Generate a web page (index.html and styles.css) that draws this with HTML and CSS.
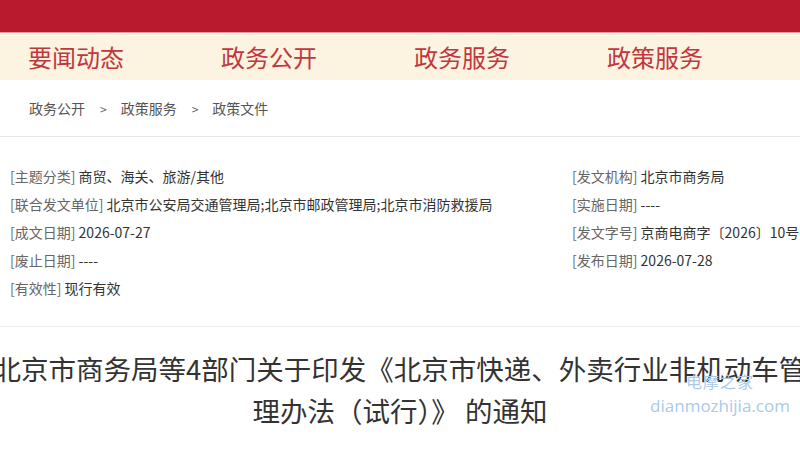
FILE: index.html
```html
<!DOCTYPE html>
<html lang="zh-CN">
<head>
<meta charset="utf-8">
<title>政策文件</title>
<link rel="stylesheet" href="styles.css">
</head>
<body>
<div class="page">
  <div class="topbar"></div>
  <nav class="nav">
    <a class="nav-item">要闻动态</a>
    <a class="nav-item">政务公开</a>
    <a class="nav-item">政务服务</a>
    <a class="nav-item">政策服务</a>
  </nav>
  <div class="crumbs">
    <span>政务公开</span><span class="sep">&gt;</span><span>政策服务</span><span class="sep">&gt;</span><span>政策文件</span>
  </div>
  <div class="meta">
    <div class="col">
      <div class="row"><span class="lab">[主题分类]</span> 商贸、海关、旅游/其他</div>
      <div class="row"><span class="lab">[联合发文单位]</span> 北京市公安局交通管理局;北京市邮政管理局;北京市消防救援局</div>
      <div class="row"><span class="lab">[成文日期]</span> 2026-07-27</div>
      <div class="row"><span class="lab">[废止日期]</span> ----</div>
      <div class="row"><span class="lab">[有效性]</span> 现行有效</div>
    </div>
    <div class="col">
      <div class="row"><span class="lab">[发文机构]</span> 北京市商务局</div>
      <div class="row"><span class="lab">[实施日期]</span> ----</div>
      <div class="row"><span class="lab">[发文字号]</span> 京商电商字〔2026〕10号</div>
      <div class="row"><span class="lab">[发布日期]</span> 2026-07-28</div>
    </div>
  </div>
  <h1 class="title">北京市商务局等4部门关于印发《北京市快递、外卖行业非机动车管理办法（试行）》 的通知</h1>
  <div class="watermark">
    <div class="wm-cn">电摩之家</div>
    <div class="wm-en">dianmozhijia.com</div>
  </div>
</div>
</body>
</html>
```
FILE: styles.css
```css
* { box-sizing: border-box; }
html, body { margin: 0; padding: 0; }
body {
  width: 800px;
  height: 450px;
  overflow: hidden;
  background: #fff;
  font-family: "Noto Sans CJK SC", "Noto Sans", sans-serif;
  color: #333;
}
.page { position: relative; width: 800px; height: 450px; overflow: hidden; }
.topbar {
  height: 33px;
  background: #b91a2d;
  border-bottom: 1px solid #e79a9d;
}
.nav {
  height: 47px;
  background: #fdf3e1;
  display: flex;
  align-items: center;
  padding-left: 28px;
}
.nav-item {
  width: 194px;
  font-size: 24px;
  line-height: 47px;
  color: #c1373d;
  text-decoration: none;
}
.crumbs {
  height: 57px;
  border-bottom: 1px solid #e8e8e8;
  display: flex;
  align-items: center;
  padding-left: 29px;
  font-size: 14px;
  color: #555;
}
.crumbs .sep { margin: 0 14px 0 15px; font-size: 12px; color: #666; }
.meta {
  display: grid;
  grid-template-columns: 562px 1fr;
  padding: 25px 0 24px 10px;
  border-bottom: 1px solid #ececec;
  font-size: 14px;
  color: #333;
}
.row { line-height: 28px; height: 28px; white-space: nowrap; }
.lab { color: #666; }
.title {
  margin: 0 -8px;
  padding-top: 20px;
  font-size: 27.5px;
  line-height: 42px;
  font-weight: normal;
  text-align: center;
  color: #333;
}
.watermark {
  position: absolute;
  left: 640px;
  top: 369px;
  width: 160px;
  text-align: center;
  color: #a9cbe7;
}
.wm-cn { font-size: 16px; line-height: 24px; letter-spacing: 1px; }
.wm-en { font-size: 17px; line-height: 26px; font-family: "Open Sans", "Noto Sans", sans-serif; }
```
